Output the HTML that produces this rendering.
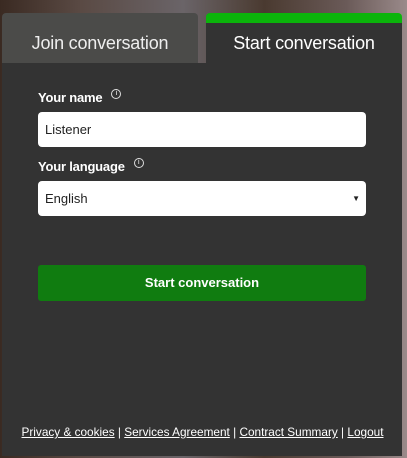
<!DOCTYPE html>
<html><head><style>
*{margin:0;padding:0;box-sizing:border-box}
body{width:407px;height:458px;overflow:hidden;font-family:"Liberation Sans",sans-serif;position:relative;
background:linear-gradient(90deg,#3a2a22 0%,#5a4a44 20%,#6a6468 45%,#4a3a30 65%,#6a5a58 85%,#9a8a8a 100%);}
.tab{position:absolute;top:13px;height:50px;width:196px;color:#fff;font-size:18px;text-align:center;line-height:60px;border-radius:4px 4px 0 0;letter-spacing:-0.2px}
.t1{left:2px;background:#4b4b49;color:#eee}
.t2{left:206px;background:#333;border-top:10px solid #0bb40b;line-height:40px}
.panel{position:absolute;left:2px;top:63px;width:400px;height:393px;background:#333}
.lbl{position:absolute;left:38px;color:#fff;font-size:13px;font-weight:bold;letter-spacing:-0.2px}
.info{display:inline-block;width:10px;height:10px;border:1px solid #ddd;border-radius:50%;font-size:7px;line-height:8px;text-align:center;font-weight:normal;vertical-align:top;margin-left:9px;margin-top:-1px}
.inp{position:absolute;left:38px;width:328px;height:35px;background:#fff;border-radius:4px;font-size:13px;color:#222;padding-left:7px;line-height:35px}
.btn{position:absolute;left:38px;top:265px;width:328px;height:36px;background:#107c10;border-radius:3px;color:#fff;font-weight:bold;font-size:13px;text-align:center;line-height:36px}
.foot{position:absolute;left:0;width:405px;top:425px;text-align:center;color:#fff;font-size:11.8px}
.foot u{text-decoration:underline}
</style></head><body>
<div class="tab t1">Join conversation</div>
<div class="panel"></div>
<div class="tab t2">Start conversation</div>
<div class="lbl" style="top:90px">Your name<span class="info">i</span></div>
<div class="inp" style="top:112px">Listener</div>
<div class="lbl" style="top:159px">Your language<span class="info">i</span></div>
<div class="inp" style="top:181px">English<span style="position:absolute;right:6px;font-size:8px">▼</span></div>
<div class="btn">Start conversation</div>
<div class="foot"><u>Privacy &amp; cookies</u> | <u>Services Agreement</u> | <u>Contract Summary</u> | <u>Logout</u></div>
</body></html>
